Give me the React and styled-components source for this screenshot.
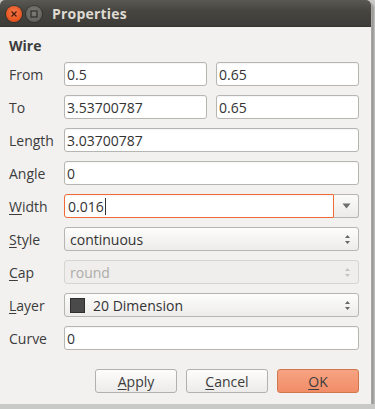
import React from "react";
import styled, { createGlobalStyle } from "styled-components";

const GlobalStyle = createGlobalStyle`
  html, body {
    margin: 0;
    padding: 0;
    background: #c9c9c7;
  }
  body {
    font-family: "Open Sans", "DejaVu Sans", sans-serif;
  }
`;

const Window = styled.div`
  width: 371px;
  height: 404px;
  background: #f2f1f0;
  border-radius: 5px 5px 0 0;
  box-shadow: 1px 1px 0 #a9a8a5, 3px 3px 2px rgba(0, 0, 0, 0.25);
  display: flex;
  flex-direction: column;
  overflow: hidden;
`;

const TitleBar = styled.div`
  height: 27px;
  flex: none;
  display: flex;
  align-items: center;
  padding-left: 6px;
  gap: 4px;
  background: linear-gradient(#5a5852, #46453f 40%, #3c3b37);
  box-shadow: inset 0 -1px 0 #35342f;
`;

const CircleButton = styled.div`
  width: 16px;
  height: 16px;
  border-radius: 50%;
  display: flex;
  align-items: center;
  justify-content: center;
  background: ${(p) =>
    p.$close
      ? "radial-gradient(circle at 50% 40%, #f47a4e, #e6531d 70%, #c9461a)"
      : "radial-gradient(circle at 50% 40%, #7d7c77, #64635e 70%, #52514c)"};
  box-shadow: 0 0 0 1px rgba(0, 0, 0, 0.25);
`;

const Title = styled.div`
  margin-left: 6px;
  color: #dfdbd2;
  font-weight: 700;
  font-size: 14px;
  letter-spacing: 0.2px;
`;

const Body = styled.div`
  padding: 9px 12px 0 9px;
  display: flex;
  flex-direction: column;
`;

const Heading = styled.div`
  font-weight: 700;
  font-size: 14px;
  color: #3c3c3c;
  height: 20px;
  line-height: 20px;
  margin-bottom: 6px;
`;

const Form = styled.div`
  display: grid;
  grid-template-columns: 55px 1fr;
  grid-auto-rows: 24px;
  row-gap: 9px;
  align-items: center;
`;

const Label = styled.div`
  font-size: 14px;
  color: #3c3c3c;
  u {
    text-decoration-thickness: 1px;
    text-underline-offset: 2px;
  }
`;

const Pair = styled.div`
  display: grid;
  grid-template-columns: 1fr 1fr;
  column-gap: 9px;
  height: 24px;
`;

const Field = styled.div`
  height: 24px;
  box-sizing: border-box;
  border: 1px solid ${(p) => (p.$focus ? "#ef6a35" : "#b6b5b1")};
  border-radius: ${(p) => (p.$focus ? "3px 0 0 3px" : "3px")};
  background: #fff;
  display: flex;
  align-items: center;
  padding-left: 2px;
  font-size: 14px;
  color: #333;
  box-shadow: inset 0 1px 1px rgba(0, 0, 0, 0.04);
`;

const Caret = styled.span`
  display: inline-block;
  width: 1px;
  height: 17px;
  background: #333;
  margin-left: 1px;
`;

const ComboRow = styled.div`
  display: flex;
  height: 24px;
`;

const ComboInput = styled(Field)`
  flex: 1;
  padding-left: 3px;
`;

const DropButton = styled.div`
  width: 25px;
  box-sizing: border-box;
  border: 1px solid #b6b5b1;
  border-left: none;
  border-radius: 0 3px 3px 0;
  background: linear-gradient(#fbfbfa, #ecebe9);
  display: flex;
  align-items: center;
  justify-content: center;
`;

const Select = styled.div`
  height: 24px;
  box-sizing: border-box;
  border: 1px solid ${(p) => (p.$disabled ? "#d6d5d2" : "#b6b5b1")};
  border-radius: 3px;
  background: ${(p) =>
    p.$disabled ? "#efeeed" : "linear-gradient(#fdfdfc, #edecea)"};
  display: flex;
  align-items: center;
  padding: 0 7px 0 5px;
  font-size: 14px;
  color: ${(p) => (p.$disabled ? "#aeaca8" : "#333")};
`;

const SelectText = styled.span`
  flex: 1;
  display: flex;
  align-items: center;
  gap: 8px;
`;

const Swatch = styled.span`
  width: 13px;
  height: 13px;
  background: #4a4a4a;
  border: 1px solid #2e2e2e;
`;

const Buttons = styled.div`
  display: flex;
  justify-content: flex-end;
  gap: 9px;
  margin-top: 19px;
`;

const Button = styled.div`
  width: 82px;
  height: 24px;
  box-sizing: border-box;
  border-radius: 3px;
  border: 1px solid ${(p) => (p.$primary ? "#d1774f" : "#b3b1ad")};
  background: ${(p) =>
    p.$primary
      ? "linear-gradient(#f7a382, #f18d68)"
      : "linear-gradient(#fdfdfc, #ecebe9)"};
  display: flex;
  align-items: center;
  justify-content: center;
  font-size: 14px;
  color: #3c3c3c;
  u {
    text-decoration-thickness: 1px;
    text-underline-offset: 2px;
  }
`;

const UpDown = ({ color = "#666" }) => (
  <svg width="7" height="11" viewBox="0 0 7 11">
    <path d="M3.5 1 L6 4 H1 Z" fill={color} />
    <path d="M3.5 10 L6 7 H1 Z" fill={color} />
  </svg>
);

const Down = () => (
  <svg width="9" height="6" viewBox="0 0 9 6">
    <path d="M0.5 0.5 H8.5 L4.5 5.5 Z" fill="#6e6e6e" />
  </svg>
);

export default function App() {
  return (
    <>
      <GlobalStyle />
      <Window>
        <TitleBar>
          <CircleButton $close>
            <svg width="8" height="8" viewBox="0 0 8 8">
              <path d="M1.5 1.5 L6.5 6.5 M6.5 1.5 L1.5 6.5" stroke="#4a1a08" strokeWidth="1.3" />
            </svg>
          </CircleButton>
          <CircleButton>
            <svg width="8" height="8" viewBox="0 0 8 8">
              <rect x="1" y="1" width="6" height="6" fill="none" stroke="#2f2e2a" strokeWidth="1.2" />
            </svg>
          </CircleButton>
          <Title>Properties</Title>
        </TitleBar>
        <Body>
          <Heading>Wire</Heading>
          <Form>
            <Label>From</Label>
            <Pair>
              <Field>0.5</Field>
              <Field>0.65</Field>
            </Pair>
            <Label>To</Label>
            <Pair>
              <Field>3.53700787</Field>
              <Field>0.65</Field>
            </Pair>
            <Label>Length</Label>
            <Field>3.03700787</Field>
            <Label>Angle</Label>
            <Field>0</Field>
            <Label>
              <u>W</u>idth
            </Label>
            <ComboRow>
              <ComboInput $focus>
                0.016
                <Caret />
              </ComboInput>
              <DropButton>
                <Down />
              </DropButton>
            </ComboRow>
            <Label>
              <u>S</u>tyle
            </Label>
            <Select>
              <SelectText>continuous</SelectText>
              <UpDown />
            </Select>
            <Label>
              <u>C</u>ap
            </Label>
            <Select $disabled>
              <SelectText>round</SelectText>
              <UpDown color="#c4c3c0" />
            </Select>
            <Label>
              <u>L</u>ayer
            </Label>
            <Select>
              <SelectText>
                <Swatch />
                20 Dimension
              </SelectText>
              <UpDown />
            </Select>
            <Label>Curve</Label>
            <Field>0</Field>
          </Form>
          <Buttons>
            <Button>
              <span>
                <u>A</u>pply
              </span>
            </Button>
            <Button>
              <span>
                <u>C</u>ancel
              </span>
            </Button>
            <Button $primary>
              <span>
                <u>O</u>K
              </span>
            </Button>
          </Buttons>
        </Body>
      </Window>
    </>
  );
}
